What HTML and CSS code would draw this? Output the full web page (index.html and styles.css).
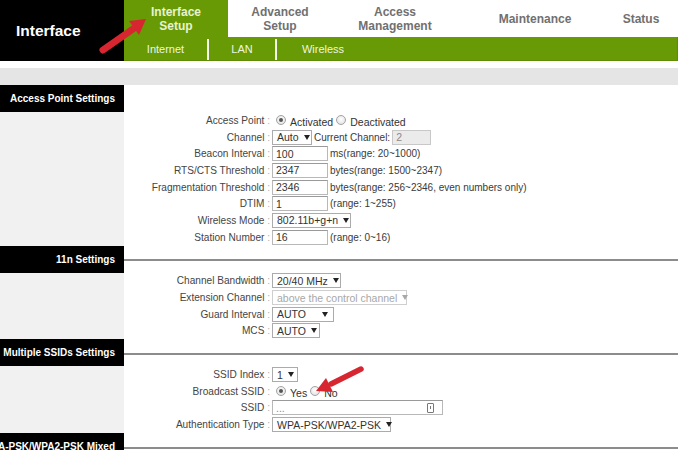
FILE: index.html
```html
<!DOCTYPE html>
<html>
<head>
<meta charset="utf-8">
<link rel="stylesheet" href="styles.css">
</head>
<body>
<div class="page">
  <header class="top">
    <div class="brand">Interface</div>
    <div class="nav">
      <div class="tabs">
        <div class="tab active">Interface<br>Setup</div>
        <div class="tab">Advanced<br>Setup</div>
        <div class="tab tab-am">Access<br>Management</div>
        <div class="tab tab-mt">Maintenance</div>
        <div class="tab tab-st">Status</div>
      </div>
      <div class="subnav">
        <div class="sub sub-1">Internet</div>
        <div class="sub sub-2">LAN</div>
        <div class="sub sub-3">Wireless</div>
      </div>
    </div>
  </header>
  <div class="gap"></div>
  <div class="band"></div>

  <section class="section">
    <div class="sec-title">Access Point Settings</div>
    <div class="sec-blank"></div>
    <div class="side"></div>
    <div class="rows">
      <div class="row"><div class="label">Access Point <span class="c">:</span></div>
        <div class="field"><span class="radio on r-first"></span><span class="rtext">Activated</span><span class="radio"></span><span class="rtext">Deactivated</span></div></div>
      <div class="row"><div class="label">Channel <span class="c">:</span></div>
        <div class="field"><span class="sel w-auto">Auto<i></i></span><span class="txt">Current Channel:</span><span class="inp dis w-cur">2</span></div></div>
      <div class="row"><div class="label">Beacon Interval <span class="c">:</span></div>
        <div class="field"><span class="inp">100</span><span class="txt">ms(range: 20~1000)</span></div></div>
      <div class="row"><div class="label">RTS/CTS Threshold <span class="c">:</span></div>
        <div class="field"><span class="inp">2347</span><span class="txt">bytes(range: 1500~2347)</span></div></div>
      <div class="row"><div class="label">Fragmentation Threshold <span class="c">:</span></div>
        <div class="field"><span class="inp">2346</span><span class="txt">bytes(range: 256~2346, even numbers only)</span></div></div>
      <div class="row"><div class="label">DTIM <span class="c">:</span></div>
        <div class="field"><span class="inp">1</span><span class="txt">(range: 1~255)</span></div></div>
      <div class="row"><div class="label">Wireless Mode <span class="c">:</span></div>
        <div class="field"><span class="sel w-mode">802.11b+g+n<i></i></span></div></div>
      <div class="row"><div class="label">Station Number <span class="c">:</span></div>
        <div class="field"><span class="inp">16</span><span class="txt">(range: 0~16)</span></div></div>
    </div>
  </section>

  <section class="section">
    <div class="sec-title">11n Settings</div>
    <div class="sec-rule"></div>
    <div class="side"></div>
    <div class="rows">
      <div class="row"><div class="label">Channel Bandwidth <span class="c">:</span></div>
        <div class="field"><span class="sel w-bw">20/40 MHz<i></i></span></div></div>
      <div class="row"><div class="label">Extension Channel <span class="c">:</span></div>
        <div class="field"><span class="sel dis w-ext">above the control channel<i></i></span></div></div>
      <div class="row"><div class="label">Guard Interval <span class="c">:</span></div>
        <div class="field"><span class="sel w-gi">AUTO<i></i></span></div></div>
      <div class="row"><div class="label">MCS <span class="c">:</span></div>
        <div class="field"><span class="sel w-mcs">AUTO<i></i></span></div></div>
    </div>
  </section>

  <section class="section">
    <div class="sec-title">Multiple SSIDs Settings</div>
    <div class="sec-rule"></div>
    <div class="side"></div>
    <div class="rows">
      <div class="row"><div class="label">SSID Index <span class="c">:</span></div>
        <div class="field"><span class="sel w-idx">1<i></i></span></div></div>
      <div class="row"><div class="label">Broadcast SSID <span class="c">:</span></div>
        <div class="field"><span class="radio on r-first"></span><span class="rtext">Yes</span><span class="radio"></span><span class="rtext">No</span></div></div>
      <div class="row"><div class="label">SSID <span class="c">:</span></div>
        <div class="field"><span class="inp w-ssid">...<b class="key"></b></span></div></div>
      <div class="row"><div class="label">Authentication Type <span class="c">:</span></div>
        <div class="field"><span class="sel w-auth">WPA-PSK/WPA2-PSK<i></i></span></div></div>
    </div>
  </section>

  <section class="section">
    <div class="sec-title">WPA-PSK/WPA2-PSK Mixed</div>
    <div class="sec-rule"></div>
  </section>

  <svg class="arrows" width="700" height="450" viewBox="0 0 700 450">
    <line x1="103" y1="50" x2="133" y2="29" stroke="#d82630" stroke-width="7" stroke-linecap="round"/>
    <polygon points="146,19 139,35 129,21" fill="#d82630"/>
    <line x1="361" y1="369" x2="331" y2="384" stroke="#d82630" stroke-width="5.5" stroke-linecap="round"/>
    <polygon points="316,391 333,392 326,378" fill="#d82630"/>
  </svg>
</div>
</body>
</html>
```

FILE: styles.css
```css
* { box-sizing: border-box; }
html, body { margin: 0; padding: 0; background: #fff; }
body { font-family: "Liberation Sans", Arial, sans-serif; color: #333; }

.page { width: 678px; position: relative; }

/* header */
.top { display: flex; height: 61px; }
.brand {
  width: 124px; background: #000; color: #fff;
  font-weight: bold; font-size: 15.5px;
  display: flex; align-items: center; padding-left: 16px;
}
.nav { flex: 1; display: flex; flex-direction: column; }
.tabs { height: 37px; display: flex; }
.tab {
  width: 104px; display: flex; align-items: center; justify-content: center;
  text-align: center; font-size: 12px; font-weight: bold; line-height: 14px;
  color: #707070;
}
.tab.active { background: #679a04; color: #e8f3cf; }
.tab-am { width: 126px; }
.tab-mt { width: 110px; margin-left: 22px; }
.tab-st { width: 70px; margin-left: 16px; }

.subnav { height: 24px; background: #679a04; display: flex; align-items: flex-end; border-bottom: 1px solid #5e8c04; border-right: 1px solid #5e8c04; }
.sub {
  height: 21px; display: flex; align-items: center; justify-content: center;
  color: #eef6e0; font-size: 11px; padding-bottom: 1px;
}
.sub-1 { width: 83px; }
.sub-2 { width: 68px; border-left: 2px solid #f4f8ec; }
.sub-3 { width: 94px; border-left: 2px solid #f4f8ec; }

.gap { height: 7px; }
.band { height: 17px; background: #e5e5e5; }

/* sections */
.section { display: grid; grid-template-columns: 124px 1fr; }
.sec-title {
  background: #000; color: #fff; font-weight: bold; font-size: 10px;
  height: 27px; display: flex; align-items: center; justify-content: flex-end;
  padding-right: 9px; white-space: nowrap; overflow: hidden;
}
.sec-rule { display: flex; align-items: center; padding-top: 2px; }
.sec-rule::before { content: ""; flex: 1; height: 2px; background: #8c8c8c; }
.side { background: #f1f1f1; }

.row { display: grid; grid-template-columns: 146px 1fr; height: 16.7px; align-items: center; }
.label { text-align: right; font-size: 10.1px; color: #444; white-space: nowrap; }
.label .c { color: #b0b0b0; }
.field { display: flex; align-items: center; padding-left: 2px; font-size: 10px; white-space: nowrap; }
.txt { margin-left: 2px; color: #3a3a3a; }

.inp {
  width: 56px; height: 15px; border: 1px solid #b8b8b8; border-top-color: #9a9a9a;
  background: #fff; font-size: 10.5px; color: #333; padding: 0 3px;
  display: flex; align-items: center; position: relative;
}
.inp.dis { background: #ebebeb; color: #8a8a8a; border-color: #c8c8c8; }
.w-cur { width: 39px; margin-left: 2px; }
.w-ssid { width: 171px; color: #888; }
.key {
  position: absolute; right: 8px; top: 2px; width: 7px; height: 10px;
  border: 1px solid #777; border-radius: 1px;
}
.key::after { content: ""; position: absolute; left: 2px; top: 2px; width: 1px; height: 3px; background: #777; }

.sel {
  height: 15px; border: 1px solid #ababab; background: #fff;
  font-size: 10.5px; color: #333; padding: 0 5px 0 4px;
  display: flex; align-items: center; justify-content: space-between;
}
.sel i {
  width: 0; height: 0; margin-left: 5px;
  border-left: 3px solid transparent; border-right: 3px solid transparent;
  border-top: 5px solid #222;
}
.sel.dis { color: #a8a8a8; border-color: #cfcfcf; }
.sel.dis i { border-top-color: #a8a8a8; }
.w-auto { width: 40px; }
.w-mode { width: 79px; }
.w-bw { width: 69px; }
.w-ext { width: 135px; }
.w-gi { width: 62px; }
.w-mcs { width: 48px; }
.w-idx { width: 26px; }
.w-auth { width: 119px; }

.radio {
  width: 10px; height: 10px; border-radius: 50%;
  border: 1px solid #a3a3a3; background: radial-gradient(circle at 50% 40%, #fff, #dcdcdc);
  position: relative; margin-left: 3px;
}
.radio.r-first { margin-left: 4px; }
.radio.on::after {
  content: ""; position: absolute; left: 2px; top: 2px; width: 4px; height: 4px;
  border-radius: 50%; background: #555;
}
.rtext { font-size: 10.5px; margin-left: 4px; position: relative; top: 2px; color: #333; }

.arrows { position: absolute; left: 0; top: 0; pointer-events: none; }
```
